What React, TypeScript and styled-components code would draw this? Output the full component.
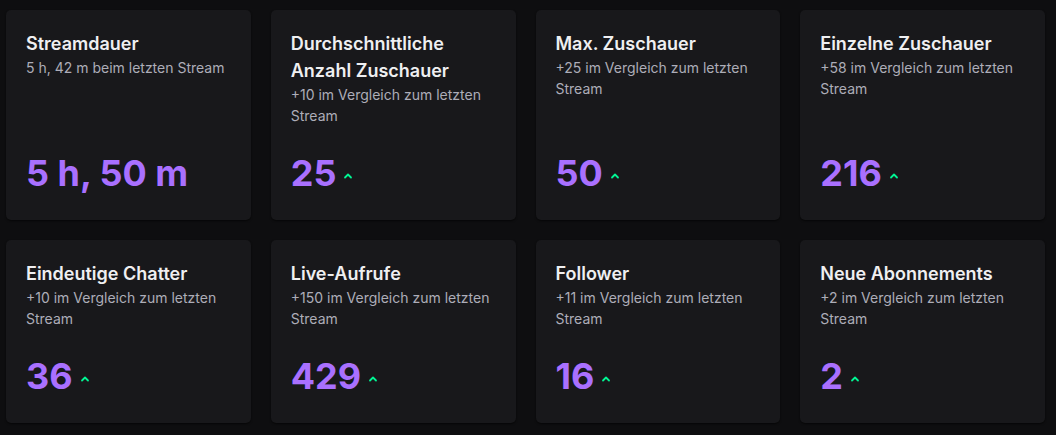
import React from 'react';
import styled, { createGlobalStyle } from 'styled-components';

interface Stat {
  title: string;
  note: string;
  value: string;
  up?: boolean;
}

const stats: Stat[] = [
  { title: 'Streamdauer', note: '5 h, 42 m beim letzten Stream', value: '5 h, 50 m' },
  { title: 'Durchschnittliche Anzahl Zuschauer', note: '+10 im Vergleich zum letzten Stream', value: '25', up: true },
  { title: 'Max. Zuschauer', note: '+25 im Vergleich zum letzten Stream', value: '50', up: true },
  { title: 'Einzelne Zuschauer', note: '+58 im Vergleich zum letzten Stream', value: '216', up: true },
  { title: 'Eindeutige Chatter', note: '+10 im Vergleich zum letzten Stream', value: '36', up: true },
  { title: 'Live-Aufrufe', note: '+150 im Vergleich zum letzten Stream', value: '429', up: true },
  { title: 'Follower', note: '+11 im Vergleich zum letzten Stream', value: '16', up: true },
  { title: 'Neue Abonnements', note: '+2 im Vergleich zum letzten Stream', value: '2', up: true },
];

const TrendUp: React.FC = () => (
  <Trend width="10" height="8" viewBox="0 0 10 8" aria-hidden>
    <path d="M2 5.5 L5 2.5 L8 5.5" fill="none" stroke="currentColor" strokeWidth="1.8" strokeLinecap="round" strokeLinejoin="round" />
  </Trend>
);

const App: React.FC = () => (
  <>
    <GlobalStyle />
    <Grid>
      {stats.map((stat) => (
        <Card key={stat.title}>
          <Title>{stat.title}</Title>
          <Note>{stat.note}</Note>
          <ValueRow>
            <Value>{stat.value}</Value>
            {stat.up && <TrendUp />}
          </ValueRow>
        </Card>
      ))}
    </Grid>
  </>
);

const GlobalStyle = createGlobalStyle`
  html, body {
    margin: 0;
    background: #0e0e10;
    font-family: Inter, "Noto Sans", sans-serif;
    -webkit-font-smoothing: antialiased;
  }
`;

const Grid = styled.div`
  display: grid;
  grid-template-columns: repeat(4, 1fr);
  gap: 20px;
  padding: 10px 11px 12px 6px;
`;

const Card = styled.div`
  display: flex;
  flex-direction: column;
  padding: 20px;
  background: #18181b;
  border-radius: 5px;
  box-shadow: 0 1px 2px rgba(0, 0, 0, 0.6);
`;

const Title = styled.div`
  color: #efeff1;
  font-size: 18px;
  font-weight: 600;
  line-height: 27px;
`;

const Note = styled.div`
  color: #adadb8;
  font-size: 14px;
  line-height: 21px;
`;

const ValueRow = styled.div`
  display: flex;
  align-items: center;
  gap: 7px;
  margin-top: auto;
  padding-top: 20px;
`;

const Value = styled.span`
  color: #a970ff;
  font-size: 36px;
  font-weight: 700;
  line-height: 54px;
`;

const Trend = styled.svg`
  color: #00f593;
  margin-top: 6px;
`;

export default App;
